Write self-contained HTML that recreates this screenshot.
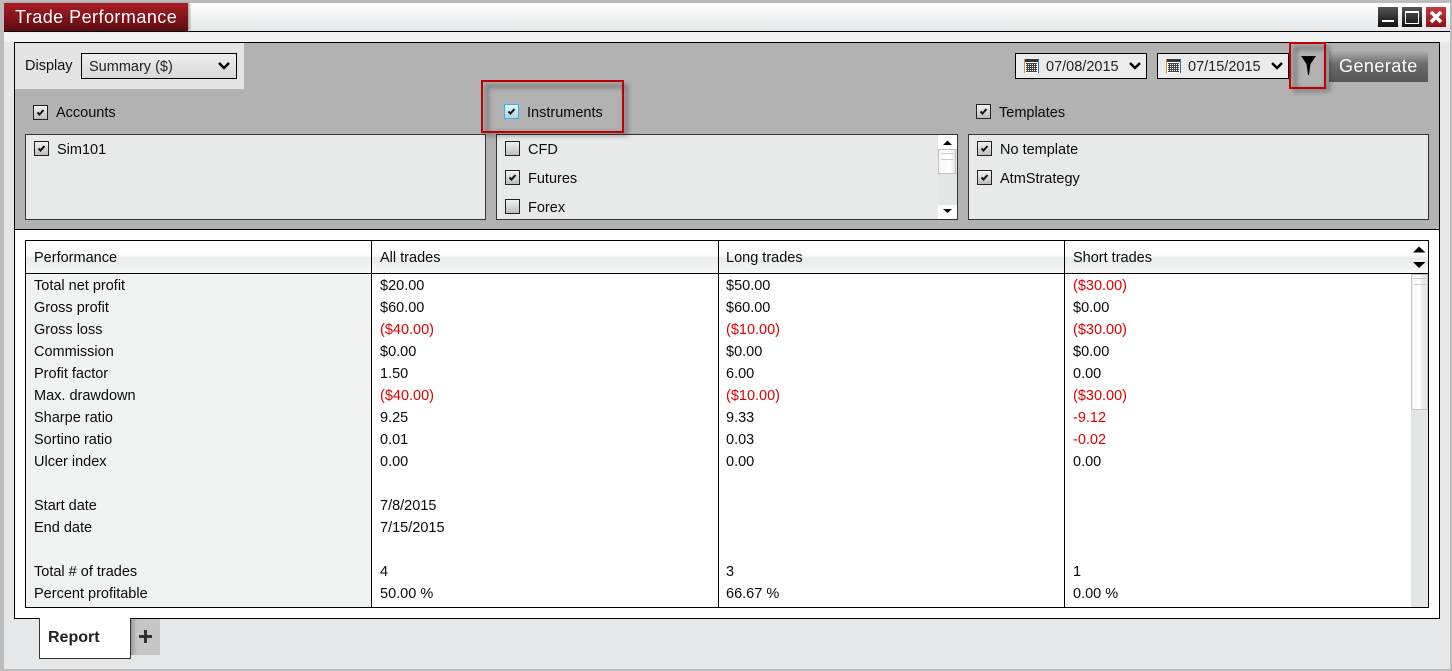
<!DOCTYPE html>
<html><head><meta charset="utf-8"><title>Trade Performance</title>
<style>
html,body{margin:0;padding:0}
body{width:1452px;height:671px;overflow:hidden;position:relative;background:#e6e7e8;font-family:"Liberation Sans",sans-serif;font-size:14.5px;color:#0a0a0a}
.a,.t{position:absolute}
.t{white-space:nowrap;line-height:16px}
.cb{position:absolute;width:13px;height:13px;border:1px solid #222;background:linear-gradient(#f2f2f2,#bdbdbd)}
.cb svg{position:absolute;left:2px;top:2px}
.r{color:#e00000}
.sel{position:absolute;border:1px solid #000;background:linear-gradient(#efefef,#d8d8d8);box-sizing:border-box}
.frame{position:absolute;box-sizing:border-box;border:2px solid #c00000}
.shadow{position:absolute;box-sizing:border-box;border:4px solid rgba(0,0,0,.3);filter:blur(2.500px)}
</style></head><body>
<div class="a" style="left:0;top:0;width:1452px;height:3px;background:#bcbcbc"></div>
<div class="a" style="left:0;top:0;width:4px;height:671px;background:#bcbcbc"></div>
<div class="a" style="left:1450px;top:0;width:2px;height:671px;background:#bcbcbc"></div>
<div class="a" style="left:0;top:669px;width:1452px;height:2px;background:#bcbcbc"></div>
<!-- title bar -->
<div class="a" style="left:4px;top:3px;width:1446px;height:28px;background:linear-gradient(#fff,#e4e6e7)"></div>
<div class="a" style="left:4px;top:31px;width:1446px;height:1px;background:#000"></div>
<div class="a" style="left:4px;top:32px;width:1446px;height:10px;background:#f1f3f3"></div>
<div class="a" style="left:4px;top:3px;width:184px;height:28px;background:linear-gradient(#ab1c24,#5c0c12);box-shadow:2px 0 2px rgba(0,0,0,.3)"></div>
<div class="t" style="left:15px;top:6px;font-size:18px;line-height:22px;color:#fff;letter-spacing:.46px">Trade Performance</div>
<div class="a" style="left:1378px;top:7px;width:20px;height:20px;background:linear-gradient(#555,#111)"><div class="a" style="left:4px;top:13px;width:12px;height:2px;background:#fff"></div></div>
<div class="a" style="left:1402px;top:7px;width:20px;height:20px;background:linear-gradient(#555,#111)"><div class="a" style="left:3px;top:4px;width:12px;height:10px;border:1px solid #fff;border-top-width:2px"></div></div>
<div class="a" style="left:1426px;top:7px;width:20px;height:20px;background:linear-gradient(#c43a3f,#8c1219)"><svg width="20" height="20" style="position:absolute;left:0;top:0"><path d="M5 5L15 15M15 5L5 15" stroke="#fff" stroke-width="3.500"/></svg></div>

<!-- main container -->
<div class="a" style="left:14px;top:42px;width:1426px;height:577px;box-sizing:border-box;border:1px solid #000;background:#fff"></div>
<div class="a" style="left:15px;top:43px;width:1424px;height:186px;background:#b2b2b2"></div>
<div class="a" style="left:15px;top:229px;width:1424px;height:1px;background:#000"></div>
<div class="a" style="left:15px;top:43px;width:229px;height:46px;background:#e4e4e4"></div>
<div class="t" style="left:25px;top:58px;color:#111">Display</div>
<div class="sel" style="left:81px;top:53px;width:156px;height:26px"></div>
<div class="t" style="left:89px;top:59px;color:#222">Summary ($)</div>
<svg class="a" style="left:217px;top:61px" width="14" height="10"><path d="M2 2L7 7L12 2" fill="none" stroke="#000" stroke-width="2.400"/></svg>

<div class="sel" style="left:1015px;top:53px;width:132px;height:26px;background:#ebebeb"></div>
<svg class="a" style="left:1024px;top:59px" width="15" height="14"><rect width="15" height="14" fill="#fff"/><rect width="1" height="14" fill="#e98a1e"/><rect x="14" width="1" height="14" fill="#2a6fc0"/><rect x="1" width="13" height="3" fill="#333"/><path d="M2 4.500h11M2 6.500h11M2 8.500h11M2 10.500h11M2 12.500h11M3.500 4v9M5.500 4v9M7.500 4v9M9.500 4v9M11.500 4v9" stroke="#444" stroke-width="1"/></svg>
<div class="t" style="left:1046px;top:59px;color:#222">07/08/2015</div>
<svg class="a" style="left:1128px;top:61px" width="14" height="10"><path d="M2 2L7 7L12 2" fill="none" stroke="#000" stroke-width="2.400"/></svg>
<div class="sel" style="left:1157px;top:53px;width:132px;height:26px;background:#ebebeb"></div>
<svg class="a" style="left:1166px;top:59px" width="15" height="14"><rect width="15" height="14" fill="#fff"/><rect width="1" height="14" fill="#e98a1e"/><rect x="14" width="1" height="14" fill="#2a6fc0"/><rect x="1" width="13" height="3" fill="#333"/><path d="M2 4.500h11M2 6.500h11M2 8.500h11M2 10.500h11M2 12.500h11M3.500 4v9M5.500 4v9M7.500 4v9M9.500 4v9M11.500 4v9" stroke="#444" stroke-width="1"/></svg>
<div class="t" style="left:1188px;top:59px;color:#222">07/15/2015</div>
<svg class="a" style="left:1270px;top:61px" width="14" height="10"><path d="M2 2L7 7L12 2" fill="none" stroke="#000" stroke-width="2.400"/></svg>
<svg class="a" style="left:1300px;top:55px" width="18" height="22"><path d="M1 1H16L10.500 9L9 20H8L6.500 9Z" fill="#000"/></svg>
<div class="a" style="left:1329px;top:49px;width:99px;height:33px;background:linear-gradient(#b9b9b9 0,#6d6d6d 45%,#545557 100%)"></div>
<div class="t" style="left:1339px;top:55px;font-size:18px;line-height:22px;color:#fff;letter-spacing:.45px">Generate</div>

<!-- checkbox headers -->
<div class="cb" style="left:33px;top:105px"><svg width="9" height="9"><path d="M1.500 4.500L3.500 6.500L7.500 2" fill="none" stroke="#111" stroke-width="2"/></svg></div>
<div class="t" style="left:56px;top:105px">Accounts</div>
<div class="cb" style="left:504px;top:104px;border-color:#18c0f0;background:linear-gradient(#eaf6fa,#bbccdd)"><svg width="9" height="9"><path d="M1.500 4.500L3.500 6.500L7.500 2" fill="none" stroke="#111" stroke-width="2"/></svg></div>
<div class="t" style="left:527px;top:105px">Instruments</div>
<div class="cb" style="left:976px;top:104px"><svg width="9" height="9"><path d="M1.500 4.500L3.500 6.500L7.500 2" fill="none" stroke="#111" stroke-width="2"/></svg></div>
<div class="t" style="left:999px;top:105px">Templates</div>

<!-- list boxes -->
<div class="a" style="left:25px;top:134px;width:461px;height:86px;box-sizing:border-box;border:1px solid #333;background:#e8eaea"></div>
<div class="a" style="left:496px;top:134px;width:462px;height:86px;box-sizing:border-box;border:1px solid #333;background:#e8eaea"></div>
<div class="a" style="left:968px;top:134px;width:461px;height:86px;box-sizing:border-box;border:1px solid #333;background:#e8eaea"></div>

<div class="cb" style="left:34px;top:141px"><svg width="9" height="9"><path d="M1.500 4.500L3.500 6.500L7.500 2" fill="none" stroke="#111" stroke-width="2"/></svg></div>
<div class="t" style="left:57px;top:142px">Sim101</div>

<div class="cb" style="left:505px;top:141px"></div><div class="t" style="left:528px;top:142px">CFD</div>
<div class="cb" style="left:505px;top:170px"><svg width="9" height="9"><path d="M1.500 4.500L3.500 6.500L7.500 2" fill="none" stroke="#111" stroke-width="2"/></svg></div><div class="t" style="left:528px;top:171px">Futures</div>
<div class="cb" style="left:505px;top:199px"></div><div class="t" style="left:528px;top:200px">Forex</div>
<div class="a" style="left:938px;top:135px;width:19px;height:84px;background:#e4e6e6"></div>
<div class="a" style="left:938px;top:135px;width:19px;height:14px;background:#fff"></div>
<div class="a" style="left:938px;top:205px;width:19px;height:14px;background:#fff"></div>
<svg class="a" style="left:938px;top:135px" width="19" height="84"><path d="M5 10L9.500 5.500L14 10Z M5 74H14L9.500 78Z" fill="#000"/></svg>
<div class="a" style="left:938px;top:149px;width:18px;height:25px;box-sizing:border-box;border:1px solid #c2c2c2;background:linear-gradient(90deg,#f6f6f6,#fff 70%,#e4e4e4)"></div>
<div class="a" style="left:941px;top:153px;width:12px;height:5px;border-top:1px solid #ccc;border-bottom:1px solid #ccc"></div>

<div class="cb" style="left:977px;top:141px"><svg width="9" height="9"><path d="M1.500 4.500L3.500 6.500L7.500 2" fill="none" stroke="#111" stroke-width="2"/></svg></div><div class="t" style="left:1000px;top:142px">No template</div>
<div class="cb" style="left:977px;top:170px"><svg width="9" height="9"><path d="M1.500 4.500L3.500 6.500L7.500 2" fill="none" stroke="#111" stroke-width="2"/></svg></div><div class="t" style="left:1000px;top:171px">AtmStrategy</div>

<!-- callout frames -->
<div class="shadow" style="left:485px;top:84px;width:143px;height:52px"></div>
<div class="frame" style="left:481px;top:80px;width:143px;height:53px"></div>
<div class="shadow" style="left:1293px;top:46px;width:37px;height:46px"></div>
<div class="frame" style="left:1289px;top:42px;width:37px;height:47px"></div>

<!-- table -->
<div class="a" style="left:25px;top:240px;width:1404px;height:368px;box-sizing:border-box;border:1px solid #000;background:#fff"></div>
<div class="a" style="left:26px;top:241px;width:1402px;height:32px;background:linear-gradient(#fff 0,#fff 14px,#e9ebeb 17px,#f6f7f7 100%)"></div>
<div class="a" style="left:26px;top:273px;width:1402px;height:1px;background:#000"></div>
<div class="a" style="left:26px;top:274px;width:345px;height:333px;background:#f1f3f3"></div>
<div class="a" style="left:371px;top:241px;width:1px;height:366px;background:#000"></div>
<div class="a" style="left:718px;top:241px;width:1px;height:366px;background:#000"></div>
<div class="a" style="left:1064px;top:241px;width:1px;height:366px;background:#000"></div>
<svg class="a" style="left:1411px;top:241px" width="17" height="32"><path d="M2 11.500L8 5.500L14.500 11.500Z M2 21H14.500L8 27Z" fill="#000"/></svg>
<div class="a" style="left:1411px;top:274px;width:17px;height:333px;background:#e4e5e5"></div>
<div class="a" style="left:1411px;top:274px;width:17px;height:136px;box-sizing:border-box;border:1px solid #c4c4c4;background:linear-gradient(90deg,#f4f4f4,#fff 50%,#e8e8e8 70%)"></div>
<div class="a" style="left:1414px;top:278px;width:12px;height:5px;border-top:1px solid #ccc;border-bottom:1px solid #ccc"></div>

<div class="t" style="left:34px;top:250px">Performance</div>
<div class="t" style="left:380px;top:250px">All trades</div>
<div class="t" style="left:726px;top:250px">Long trades</div>
<div class="t" style="left:1073px;top:250px">Short trades</div>

<div class="t" style="left:34px;top:278px">Total net profit</div><div class="t" style="left:380px;top:278px">$20.00</div><div class="t" style="left:726px;top:278px">$50.00</div><div class="t r" style="left:1073px;top:278px">($30.00)</div>
<div class="t" style="left:34px;top:300px">Gross profit</div><div class="t" style="left:380px;top:300px">$60.00</div><div class="t" style="left:726px;top:300px">$60.00</div><div class="t" style="left:1073px;top:300px">$0.00</div>
<div class="t" style="left:34px;top:322px">Gross loss</div><div class="t r" style="left:380px;top:322px">($40.00)</div><div class="t r" style="left:726px;top:322px">($10.00)</div><div class="t r" style="left:1073px;top:322px">($30.00)</div>
<div class="t" style="left:34px;top:344px">Commission</div><div class="t" style="left:380px;top:344px">$0.00</div><div class="t" style="left:726px;top:344px">$0.00</div><div class="t" style="left:1073px;top:344px">$0.00</div>
<div class="t" style="left:34px;top:366px">Profit factor</div><div class="t" style="left:380px;top:366px">1.50</div><div class="t" style="left:726px;top:366px">6.00</div><div class="t" style="left:1073px;top:366px">0.00</div>
<div class="t" style="left:34px;top:388px">Max. drawdown</div><div class="t r" style="left:380px;top:388px">($40.00)</div><div class="t r" style="left:726px;top:388px">($10.00)</div><div class="t r" style="left:1073px;top:388px">($30.00)</div>
<div class="t" style="left:34px;top:410px">Sharpe ratio</div><div class="t" style="left:380px;top:410px">9.25</div><div class="t" style="left:726px;top:410px">9.33</div><div class="t r" style="left:1073px;top:410px">-9.12</div>
<div class="t" style="left:34px;top:432px">Sortino ratio</div><div class="t" style="left:380px;top:432px">0.01</div><div class="t" style="left:726px;top:432px">0.03</div><div class="t r" style="left:1073px;top:432px">-0.02</div>
<div class="t" style="left:34px;top:454px">Ulcer index</div><div class="t" style="left:380px;top:454px">0.00</div><div class="t" style="left:726px;top:454px">0.00</div><div class="t" style="left:1073px;top:454px">0.00</div>
<div class="t" style="left:34px;top:498px">Start date</div><div class="t" style="left:380px;top:498px">7/8/2015</div>
<div class="t" style="left:34px;top:520px">End date</div><div class="t" style="left:380px;top:520px">7/15/2015</div>
<div class="t" style="left:34px;top:564px">Total # of trades</div><div class="t" style="left:380px;top:564px">4</div><div class="t" style="left:726px;top:564px">3</div><div class="t" style="left:1073px;top:564px">1</div>
<div class="t" style="left:34px;top:586px">Percent profitable</div><div class="t" style="left:380px;top:586px">50.00 %</div><div class="t" style="left:726px;top:586px">66.67 %</div><div class="t" style="left:1073px;top:586px">0.00 %</div>

<!-- tabs -->
<div class="a" style="left:39px;top:618px;width:92px;height:41px;box-sizing:border-box;border:1px solid #333;border-top:none;background:#fff"></div>
<div class="t" style="left:48px;top:630px;font-weight:bold;font-size:16px;color:#222">Report</div>
<div class="a" style="left:131px;top:619px;width:29px;height:36px;background:linear-gradient(90deg,#9a9a9a 0,#c6c6c6 6px,#c6c6c6 100%)"></div>
<div class="a" style="left:139px;top:635px;width:13px;height:3px;background:#333"></div>
<div class="a" style="left:144px;top:630px;width:3px;height:13px;background:#333"></div>
</body></html>
